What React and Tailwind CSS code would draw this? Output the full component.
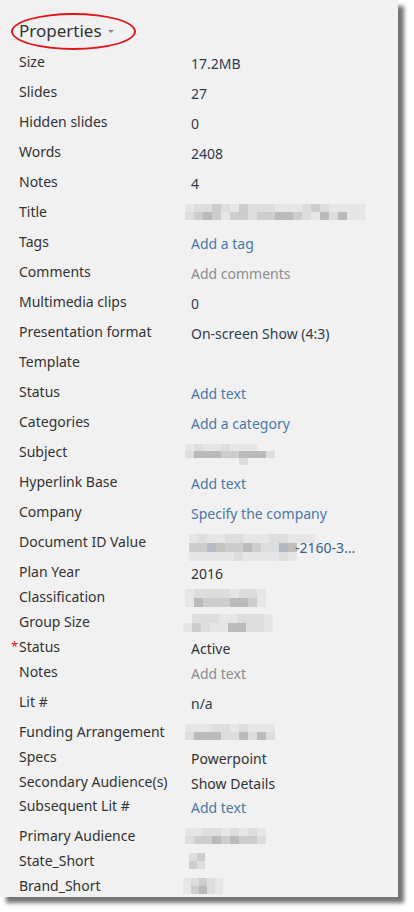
import React from "react";

const DARK = "text-[#2f3b4e]";
const BLUE = "text-[#4a78a8]";
const GRAY = "text-[#8c8c8c]";
const TEXT = "text-[#333333]";

function Blur({ rows, cw = 9, ch = 8, ox = 0 }) {
  return (
    <div className="flex flex-col" style={{ marginLeft: ox }}>
      {rows.map((r, i) => (
        <div key={i} className="flex">
          {r.map((c, j) => (
            <div key={j} style={{ width: cw, height: ch, background: c }} />
          ))}
        </div>
      ))}
    </div>
  );
}

const L = "#dddddd";
const M = "#cdcdcd";
const D = "#bababa";
const E = "#e6e6e6";
const T = "transparent";

const rows = [
  ["Size", <span className={DARK}>17.2MB</span>, 30],
  ["Slides", <span className={DARK}>27</span>, 30],
  ["Hidden slides", <span className={DARK}>0</span>, 30],
  ["Words", <span className={DARK}>2408</span>, 30],
  ["Notes", <span className={DARK}>4</span>, 30],
  [
    "Title",
    <Blur
      ox={-6}
      cw={9}
      ch={8}
      rows={[
        [E, L, L, M, L, E, M, L, L, L, E, E, E, L, M, L, E, E, E, E],
        [L, M, D, M, E, M, M, L, M, M, D, D, M, L, E, D, L, D, E, E],
      ]}
    />,
    30,
  ],
  ["Tags", <span className={BLUE}>Add a tag</span>, 30],
  ["Comments", <span className={GRAY}>Add comments</span>, 30],
  ["Multimedia clips", <span className={DARK}>0</span>, 30],
  ["Presentation format", <span className={DARK}>On-screen Show (4:3)</span>, 30],
  ["Template", null, 30],
  ["Status", <span className={BLUE}>Add text</span>, 30],
  ["Categories", <span className={BLUE}>Add a category</span>, 30],
  [
    "Subject",
    <Blur
      ox={-6}
      cw={9}
      ch={7}
      rows={[
        [E, L, E, E, L, E, E, E, T, T],
        [L, D, D, D, M, M, D, D, D, L],
        [T, T, T, T, T, T, L, T, T, T],
      ]}
    />,
    30,
  ],
  ["Hyperlink Base", <span className={BLUE}>Add text</span>, 30],
  ["Company", <span className={BLUE}>Specify the company</span>, 30],
  [
    "Document ID Value",
    <span className="flex items-center">
      <Blur
        ox={-2}
        cw={9}
        ch={9}
        rows={[
          [E, L, E, E, L, L, E, E, E, L, L, E, E, E],
          [M, M, "#b3bcc6", "#c6c2bd", M, M, D, M, L, L, "#afbac5", "#c2bdb6", T, T],
          [E, E, E, E, E, L, E, E, E, E, L, E, T, T],
        ]}
      />
      <span className="text-[#365f91] -ml-[20px]">-2160-3...</span>
    </span>,
    30,
  ],
  ["Plan Year", <span className={TEXT}>2016</span>, 25],
  [
    "Classification",
    <Blur
      ox={-6}
      cw={9}
      ch={9}
      rows={[
        [E, L, L, L, L, E, L, L, E],
        [E, D, M, M, M, D, D, M, E],
      ]}
    />,
    25,
  ],
  [
    "Group Size",
    <Blur
      ox={-8}
      cw={9}
      ch={9}
      rows={[
        [T, L, L, L, E, E, L, L, L, E],
        [E, M, L, E, E, D, D, L, L, E],
      ]}
    />,
    25,
  ],
  ["Status", <span className={TEXT}>Active</span>, 25, true],
  ["Notes", <span className={GRAY}>Add text</span>, 30],
  ["Lit #", <span className={DARK}>n/a</span>, 30],
  [
    "Funding Arrangement",
    <Blur
      ox={-6}
      cw={9}
      ch={8}
      rows={[
        [E, E, E, L, L, E, L, E, E, E],
        [L, D, D, D, L, L, D, L, D, L],
      ]}
    />,
    25,
  ],
  ["Specs", <span className={TEXT}>Powerpoint</span>, 25],
  ["Secondary Audience(s)", <span className={TEXT}>Show Details</span>, 24],
  ["Subsequent Lit #", <span className={BLUE}>Add text</span>, 30],
  [
    "Primary Audience",
    <Blur
      ox={-6}
      cw={9}
      ch={8}
      rows={[
        [E, E, L, L, E, L, E, L, E],
        [L, M, M, D, M, D, M, M, L],
      ]}
    />,
    25,
  ],
  [
    "State_Short",
    <Blur ox={-2} cw={8} ch={8} rows={[[L, M], [M, L]]} />,
    25,
  ],
  [
    "Brand_Short",
    <Blur ox={-8} cw={8} ch={8} rows={[[E, L, M, L, E], [E, M, D, L, E]]} />,
    25,
  ],
];

export default function App() {
  return (
    <div className="w-[414px] h-[912px] bg-white" style={{ fontFamily: '"Noto Sans", "Open Sans", sans-serif' }}>
      <div className="w-[398px] h-[897px] bg-[#f1f1f1] shadow-[6px_6px_4px_rgba(0,0,0,0.55)] pt-[19px]">
        <div className="relative h-[33px] pl-[19px] flex items-start">
          <div className="flex items-center gap-[6px] h-[24px]">
            <span className="text-[17px] text-[#333333] leading-[24px]">Properties</span>
            <span className="w-0 h-0 border-l-[3px] border-r-[3px] border-t-[3px] border-l-transparent border-r-transparent border-t-[#888] mt-[1px]" />
          </div>
          <div className="absolute left-[11px] top-[-6px] w-[125px] h-[37px] rounded-[50%] border-2 border-[#e0141a]" />
        </div>
        <div className="flex flex-col">
          {rows.map(([label, value, h, req], i) => (
            <div key={i} className="flex text-[14px] leading-[20px]" style={{ height: h }}>
              <div className="relative w-[191px] pl-[19px] text-[#333333] shrink-0">
                {req && (
                  <span className="absolute left-[11px] top-[-1px] text-[#e0141a] text-[13px]">*</span>
                )}
                {label}
              </div>
              <div className="pt-[2px] flex items-start">{value}</div>
            </div>
          ))}
        </div>
      </div>
    </div>
  );
}
